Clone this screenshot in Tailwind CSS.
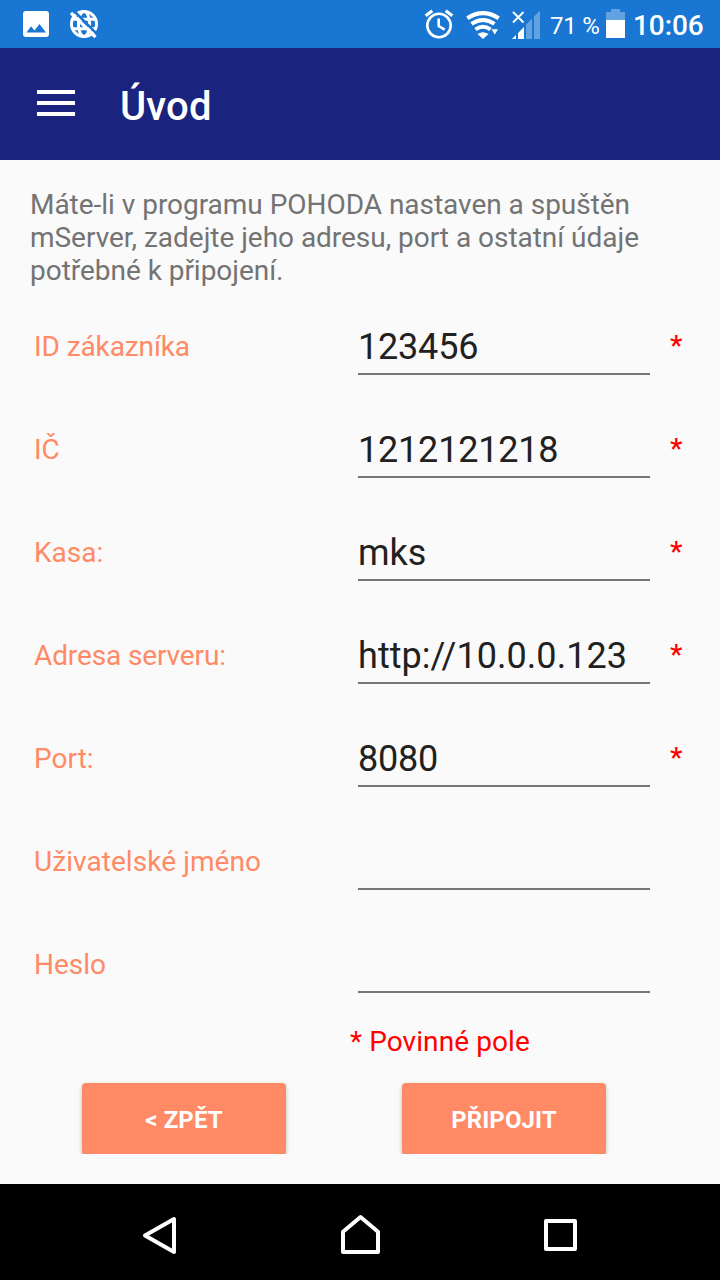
<!DOCTYPE html>
<html lang="cs">
<head>
    <meta charset="UTF-8">
    <meta name="viewport" content="width=device-width, initial-scale=1.0">
    <title>Úvod</title>
    <script src="https://cdn.jsdelivr.net/npm/@tailwindcss/browser@4"></script>
</head>
<body class="flex h-[1280px] w-[720px] flex-col overflow-hidden bg-[#fafafa] font-['Roboto',sans-serif]">
    <!-- Status bar -->
    <div class="flex h-12 shrink-0 items-center bg-[#1976d2] pl-[22px] pr-4 text-white">
        <svg class="h-12 w-7" viewBox="0 0 28 48" fill="currentColor">
            <path fill-rule="evenodd" d="M4 11h20a3 3 0 0 1 3 3v20a3 3 0 0 1-3 3H4a3 3 0 0 1-3-3V14a3 3 0 0 1 3-3zM4.500 32.500h19.500l-6.500-8.500-5 6.500-3.500-4.200z"/>
        </svg>
        <svg class="ml-5 h-12 w-7" viewBox="0 0 28 48" fill="none" stroke="currentColor">
            <g stroke-width="3">
                <circle cx="14" cy="24" r="12.500"/>
                <ellipse cx="14" cy="24" rx="5.600" ry="12.500"/>
                <path d="M2.500 19.300h23M2.500 28.700h23"/>
            </g>
            <path stroke="#1976d2" stroke-width="2.500" d="M3.500 10.500l24 24"/>
            <path stroke-width="3.200" d="M1 13l24.500 24"/>
        </svg>
        <div class="ml-auto flex items-center">
            <svg class="h-12 w-[30px]" viewBox="0 0 30 48" fill="none" stroke="currentColor">
                <circle cx="15" cy="25.500" r="11.700" stroke-width="2.600"/>
                <path stroke-width="2.600" d="M14.700 18.500v7.500l6 3.600"/>
                <path stroke-width="3.200" d="M1.700 15.700l6.600-5M21.700 10.700l6.600 5"/>
            </svg>
            <svg class="ml-3 h-12 w-[34px]" viewBox="0 0 34 48" fill="none" stroke="currentColor">
                <g stroke-width="4">
                    <path d="M1.300 18.200Q17 8 32.700 18.200"/>
                    <path d="M5.500 23.900Q17 16 28.500 23.900"/>
                    <path d="M9.500 29.500Q17 24 24.500 29.500"/>
                </g>
                <path fill="currentColor" stroke="none" d="M11.500 34Q17 30.500 22.500 34L17 39zM25.500 29.300h6.500l-3.200 5.300z"/>
            </svg>
            <svg class="ml-3 h-12 w-7" viewBox="0 0 28 48" fill="currentColor">
                <path stroke="currentColor" stroke-width="2" d="M1 12l10.500 10.500M11.500 12L1 22.500"/>
                <path d="M0 39l4-4v4zM6 33l6-6v12H6z"/>
                <path opacity=".32" d="M14 24.500l6-6V39h-6zM22 16.500l6-6V39h-6z"/>
            </svg>
            <span class="ml-2.5 w-[50px] whitespace-nowrap text-2xl leading-[46px] tracking-[-0.2px] pt-1">71 %</span>
            <svg class="ml-1.5 h-12 w-[19px]" viewBox="0 0 19 48" fill="currentColor">
                <path opacity=".32" d="M0 12h5V9h9v3h5v8H0z"/>
                <path d="M0 20h19v18H0z"/>
            </svg>
            <span class="ml-2 w-[71px] whitespace-nowrap pt-1 text-[28px] leading-[46px] font-medium tracking-[-0.1px]">10:06</span>
        </div>
    </div>

    <!-- Toolbar -->
    <header class="flex h-28 shrink-0 items-center bg-[#1a237e] pl-[37px] text-white">
        <button class="flex w-[38px] flex-col gap-[7px] pb-[2px]" aria-label="Menu">
            <span class="h-1 w-full bg-white"></span>
            <span class="h-1 w-full bg-white"></span>
            <span class="h-1 w-full bg-white"></span>
        </button>
        <h1 class="ml-[45px] pt-1.5 text-[40px] leading-[48px] font-medium tracking-[0.2px]">Úvod</h1>
    </header>

    <main class="flex grow flex-col pt-7">
        <p class="mb-2 px-[30px] text-[28px] leading-[33px] tracking-[-0.03px] text-[#737373]">Máte-li v programu POHODA nastaven a spuštěn<br>mServer, zadejte jeho adresu, port a ostatní údaje<br>potřebné k připojení.</p>

        <form class="flex flex-col text-[28px] leading-[33px]">
            <div class="flex h-[103px] items-start pt-[31px] pl-[34px]">
                <label for="customer" class="mt-1 w-[324px] tracking-[-0.1px] text-[#ff8a65]">ID zákazníka</label>
                <input id="customer" type="text" value="123456" class="h-[49px] w-[292px] border-b-2 border-[#757575] pb-[5px] text-4xl leading-[42px] tracking-[-0.2px] text-[#212121] outline-none">
                <span class="mt-[3px] ml-5 font-medium text-[#ff0000]">*</span>
            </div>
            <div class="flex h-[103px] items-start pt-[31px] pl-[34px]">
                <label for="ic" class="mt-1 w-[324px] text-[#ff8a65]">IČ</label>
                <input id="ic" type="text" value="1212121218" class="h-[49px] w-[292px] border-b-2 border-[#757575] pb-[5px] text-4xl leading-[42px] tracking-[-0.2px] text-[#212121] outline-none">
                <span class="mt-[3px] ml-5 font-medium text-[#ff0000]">*</span>
            </div>
            <div class="flex h-[103px] items-start pt-[31px] pl-[34px]">
                <label for="kasa" class="mt-1 w-[324px] text-[#ff8a65]">Kasa:</label>
                <input id="kasa" type="text" value="mks" class="h-[49px] w-[292px] border-b-2 border-[#757575] pb-[5px] text-4xl leading-[42px] text-[#212121] outline-none">
                <span class="mt-[3px] ml-5 font-medium text-[#ff0000]">*</span>
            </div>
            <div class="flex h-[103px] items-start pt-[31px] pl-[34px]">
                <label for="server" class="mt-1 w-[324px] tracking-[-0.12px] text-[#ff8a65]">Adresa serveru:</label>
                <input id="server" type="text" value="http://10.0.0.123" class="h-[49px] w-[292px] border-b-2 border-[#757575] pb-[5px] text-4xl leading-[42px] tracking-[0.05px] text-[#212121] outline-none">
                <span class="mt-[3px] ml-5 font-medium text-[#ff0000]">*</span>
            </div>
            <div class="flex h-[103px] items-start pt-[31px] pl-[34px]">
                <label for="port" class="mt-1 w-[324px] text-[#ff8a65]">Port:</label>
                <input id="port" type="text" value="8080" class="h-[49px] w-[292px] border-b-2 border-[#757575] pb-[5px] text-4xl leading-[42px] tracking-[-0.2px] text-[#212121] outline-none">
                <span class="mt-[3px] ml-5 font-medium text-[#ff0000]">*</span>
            </div>
            <div class="flex h-[103px] items-start pt-[31px] pl-[34px]">
                <label for="user" class="mt-1 w-[324px] tracking-[0.06px] text-[#ff8a65]">Uživatelské jméno</label>
                <input id="user" type="text" class="h-[49px] w-[292px] border-b-2 border-[#757575] pb-[5px] text-4xl leading-[42px] text-[#212121] outline-none">
            </div>
            <div class="flex h-[103px] items-start pt-[31px] pl-[34px]">
                <label for="password" class="mt-1 w-[324px] text-[#ff8a65]">Heslo</label>
                <input id="password" type="password" class="h-[49px] w-[292px] border-b-2 border-[#757575] pb-[5px] text-4xl leading-[42px] text-[#212121] outline-none">
            </div>

            <p class="mt-[9px] ml-[350px] tracking-[0.08px] text-[#ff0000]">* Povinné pole</p>

            <!-- Buttons, cut at the end of the scroll area -->
            <div class="mt-[15px] flex h-[81px] items-start gap-[116px] overflow-hidden pt-[10px] pl-[82px] text-2xl font-bold text-white">
                <button type="button" class="h-[72px] w-[204px] rounded-[4px] bg-[#ff8a65] pt-0.5 tracking-[0.1px] shadow-[0_2px_4px_rgba(0,0,0,0.25)]">&lt; ZPĚT</button>
                <button type="button" class="h-[72px] w-[204px] rounded-[4px] bg-[#ff8a65] pt-0.5 tracking-[0.1px] shadow-[0_2px_4px_rgba(0,0,0,0.25)]">PŘIPOJIT</button>
            </div>
        </form>
    </main>

    <!-- Navigation bar -->
    <nav class="flex h-24 shrink-0 items-center justify-between bg-black px-[140px] text-white">
        <svg class="h-24 w-10" viewBox="0 0 40 96" fill="none" stroke="currentColor" stroke-width="4" stroke-linejoin="round">
            <path d="M5 51.500L34 35v33z"/>
        </svg>
        <svg class="h-24 w-10" viewBox="0 0 40 96" fill="none" stroke="currentColor" stroke-width="4" stroke-linejoin="round">
            <path d="M3 68V47.800L20.500 33 38 47.800V68z"/>
        </svg>
        <svg class="h-24 w-10" viewBox="0 0 40 96" fill="none" stroke="currentColor" stroke-width="4" stroke-linejoin="round">
            <path d="M6 37h29v28H6z"/>
        </svg>
    </nav>
</body>
</html>
